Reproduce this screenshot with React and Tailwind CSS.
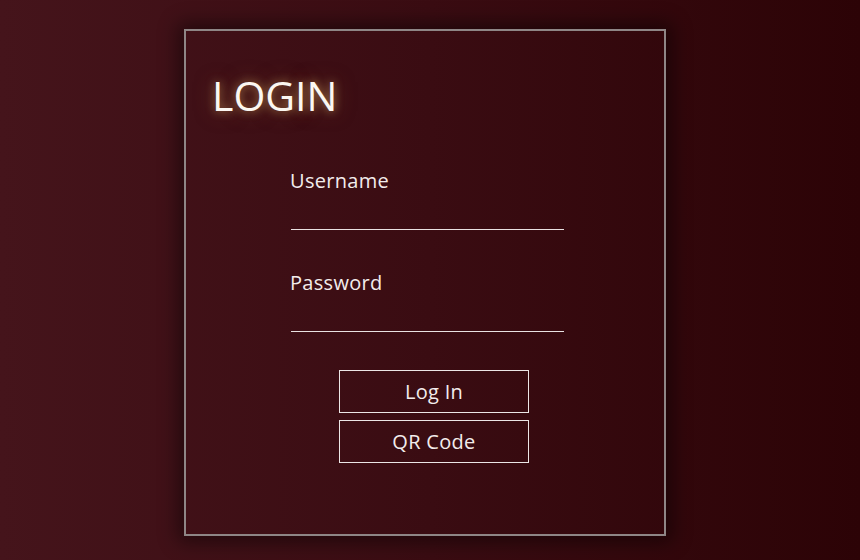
import React from 'react';

const Field = ({ label, type }) => (
  <div className="flex flex-col">
    <label className="pt-[3px] text-[20px] leading-[24px] tracking-[0.3px] text-[#f3ecec]">{label}</label>
    <input
      type={type}
      className="mt-[11px] ml-px h-[26px] w-[273px] border-0 border-b border-[#e9e2e2] bg-transparent text-white outline-none"
    />
  </div>
);

const App = () => {
  return (
    <div
      className="h-[560px] w-[860px] overflow-hidden bg-[linear-gradient(90deg,#45141b_0%,#3a0c12_50%,#2c0306_100%)] pt-[29px] pl-[184px]"
      style={{ fontFamily: '"Open Sans", "Noto Sans", sans-serif' }}
    >
      <div className="flex h-[507px] w-[482px] flex-col border-2 border-[#8f8686] shadow-[0_0_18px_6px_rgba(0,0,0,0.45)]">
        <h1
          className="mt-[40px] ml-[26px] text-[41px] leading-[48px] text-[#fbf7f2] [text-shadow:0_0_10px_rgba(190,150,90,0.8),0_0_20px_rgba(160,110,60,0.5)]"
        >
          LOGIN
        </h1>
        <div className="mt-[47px] ml-[104px] flex flex-col gap-[38px]">
          <Field label="Username" type="text" />
          <Field label="Password" type="password" />
        </div>
        <div className="mt-[38px] ml-[153px] flex flex-col gap-[7px]">
          <button className="h-[43px] w-[190px] border border-[#ece6e6] bg-transparent text-[20px] tracking-[0.3px] text-[#f3ecec]">
            Log In
          </button>
          <button className="h-[43px] w-[190px] border border-[#ece6e6] bg-transparent text-[20px] tracking-[0.3px] text-[#f3ecec]">
            QR Code
          </button>
        </div>
      </div>
    </div>
  );
};

export default App;
